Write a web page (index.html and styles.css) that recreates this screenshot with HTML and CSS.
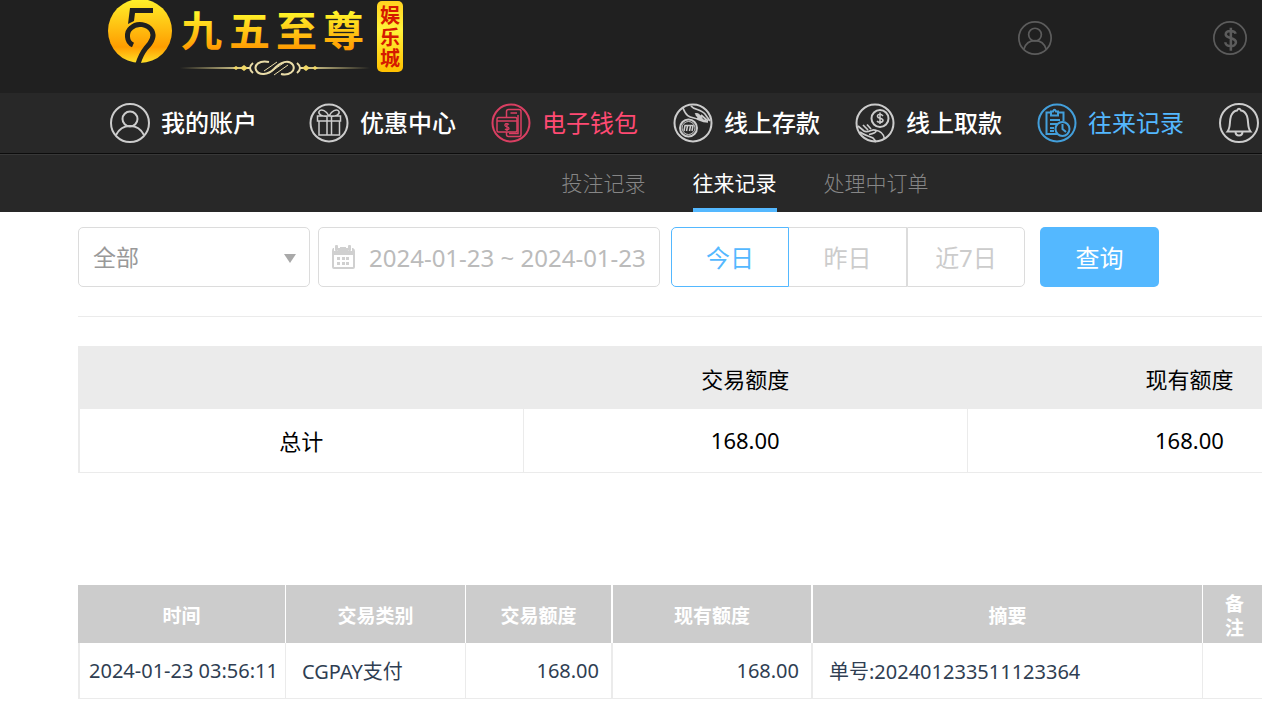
FILE: index.html
```html
<!DOCTYPE html>
<html lang="zh-CN">
<head>
    <meta charset="UTF-8">
    <meta name="viewport" content="width=device-width, initial-scale=1.0">
    <title>往来记录</title>
    <link rel="stylesheet" href="styles.css">
</head>
<body>
    <div class="page">
        <header class="header">
            <a href="#" class="logo" aria-label="九五至尊娱乐城">
                <svg width="297" height="78" viewBox="0 0 297 78">
                    <defs>
                        <linearGradient id="gold" x1="0" y1="0" x2="0" y2="1">
                            <stop offset="0" stop-color="#fff02a"/>
                            <stop offset="0.75" stop-color="#ff9d00"/>
                            <stop offset="1" stop-color="#ffe028"/>
                        </linearGradient>
                        <linearGradient id="badge" x1="0" y1="0" x2="0" y2="1">
                            <stop offset="0" stop-color="#ffd21f"/>
                            <stop offset="0.4" stop-color="#fff23a"/>
                            <stop offset="1" stop-color="#ffc000"/>
                        </linearGradient>
                        <linearGradient id="goldText" gradientUnits="userSpaceOnUse" x1="0" y1="12" x2="0" y2="50">
                            <stop offset="0" stop-color="#fff62a"/>
                            <stop offset="1" stop-color="#ff9800"/>
                        </linearGradient>
                        <linearGradient id="lineLeft">
                            <stop offset="0" stop-color="#e9d98c" stop-opacity="0"/>
                            <stop offset="1" stop-color="#f3e6a4"/>
                        </linearGradient>
                        <linearGradient id="lineRight">
                            <stop offset="0" stop-color="#f3e6a4"/>
                            <stop offset="1" stop-color="#e9d98c" stop-opacity="0"/>
                        </linearGradient>
                    </defs>
                    <!-- emblem -->
                    <circle cx="32" cy="31" r="32" fill="url(#gold)"/>
                    <path d="M22 8H45V13H27L26 21L20 24Z" fill="#202020"/>
                    <path d="M25 45C18 42 18 32 23 28C29 22 40 24 44 31C47 37 43 43 38 48C34 53 32 57 30 64" fill="none" stroke="#202020" stroke-width="5"/>
                    <!-- name -->
                    <text class="logo-name" x="73 121 168 215" y="46" fill="url(#goldText)">九五至尊</text>
                    <!-- ornament -->
                    <rect x="72" y="67" width="70" height="2" fill="url(#lineLeft)"/>
                    <rect x="192" y="67" width="70" height="2" fill="url(#lineRight)"/>
                    <g fill="none" stroke="#e9dca8" stroke-width="2">
                        <path d="M161 62C151 60 146 65 148 70C151 76 160 75 166 69C172 62 181 59 185 65C188 71 181 76 173 74"/>
                        <path d="M156 71L169 62M161 73L177 62M166 75L180 65" stroke-width="1"/>
                        <path d="M145 63Q139 68 145 73M189 63Q195 68 189 73"/>
                    </g>
                    <path d="M125 68l3-2 3 2-3 2zM132 68l4-3 4 3-4 3zM194 68l4-3 4 3-4 3zM204 68l3-2 3 2-3 2z" fill="#f0d766"/>
                    <!-- badge -->
                    <rect x="269" y="1" width="26" height="71" rx="5" fill="url(#badge)"/>
                    <text class="logo-badge" x="272 272 272" y="23 45 66">娱乐城</text>
                </svg>
            </a>
            <div class="header-tools">
                <a href="#" aria-label="账户">
                    <svg class="tool-icon" viewBox="0 0 40 40">
                        <circle cx="20" cy="20" r="19"/>
                        <circle cx="20" cy="16" r="7.5"/>
                        <path d="M7 33C9 26 14 23 20 23s11 3 13 10"/>
                    </svg>
                </a>
                <a href="#" aria-label="余额">
                    <svg class="tool-icon" viewBox="0 0 40 40">
                        <circle cx="20" cy="20" r="19"/>
                        <path d="M26.500 15C26 11 15 10 15 16C15 21 27 19 27 25C27 31 15 31 14.500 25M21 8V35" stroke-width="3"/>
                    </svg>
                </a>
            </div>
        </header>

        <nav class="main-nav">
            <a href="#" class="nav-item nav-account">
                <svg class="nav-icon" viewBox="0 0 40 40">
                    <circle cx="20" cy="20" r="19"/>
                    <circle cx="20" cy="16" r="7.5"/>
                    <path d="M6 32C9 26 14 23 20 23s11 3 14 9"/>
                </svg>
                我的账户
            </a>
            <a href="#" class="nav-item">
                <svg class="nav-icon" viewBox="0 0 40 40">
                    <circle cx="20" cy="20" r="18.500"/>
                    <path d="M8.500 13h23v5h-23zM10 18h20.500v14H10zM18 13v19M22.500 13v19M19 13C13 14 9 11 10 8.500C12 5 18 8 20 13M21 13C27 14 31 11 30 8.500C28 5 22 8 20 13" stroke-width="1.500"/>
                </svg>
                优惠中心
            </a>
            <a href="#" class="nav-item nav-wallet">
                <svg class="nav-icon" viewBox="0 0 40 40">
                    <circle cx="20" cy="20" r="18.500"/>
                    <path d="M15.500 14V8.500Q15.500 6.500 17.500 6.500H28Q30 6.500 30 8.500V31.500Q30 33.500 28 33.500H17.500Q15.500 33.500 15.500 31.500V29M19.500 10H26M27 12V30.500H18" stroke-width="1.500"/>
                    <rect x="6" y="14.500" width="20" height="14.500" rx="1.500" stroke-width="1.500"/>
                    <path d="M6 18H26M18 21.500C16 20 13.500 20.500 14 22.500C14.500 24 18 23.500 18 25.500C18 27 15 27 14 26M16 20V28" stroke-width="1.300"/>
                </svg>
                电子钱包
            </a>
            <a href="#" class="nav-item">
                <svg class="nav-icon" viewBox="0 0 40 40">
                    <circle cx="20" cy="20" r="18.500"/>
                    <circle cx="15.500" cy="25" r="8.500"/>
                    <circle cx="15.500" cy="25" r="6.500" stroke-width="1"/>
                    <path d="M11 28L12 22.500H20L19 28M13.500 28L14.500 23M16.500 28L17.500 23" stroke-width="1.500"/>
                    <path d="M10 5C13 13 16 14 21 15C26 16 28 19 35 19M18 3C21 7 28 6 32 11L37 18M22 11C25 10 27 12 29 16M24 15L33 18M28 12L35 18M23 12L30 17" stroke-width="1.700"/>
                </svg>
                线上存款
            </a>
            <a href="#" class="nav-item">
                <svg class="nav-icon" viewBox="0 0 40 40">
                    <circle cx="20" cy="20" r="18.500"/>
                    <circle cx="25" cy="15.500" r="8.500"/>
                    <path d="M28 13C26 10.500 22 11 22.500 13.500C23 16 28 14.500 28 17.500C27.500 20 23 19.500 22 18M25 9.500V21" stroke-width="1.500"/>
                    <path d="M3 23L9 28Q11 29.500 16 27.500Q20 26 21 28Q21 30 14 31.500M8 22L13 27M12 21.500L16 26M5 29C10 33 15 33 18 35Q20 37 21 39M20 27C26 28 29 31 29.500 36" stroke-width="1.700"/>
                </svg>
                线上取款
            </a>
            <a href="#" class="nav-item nav-record">
                <svg class="nav-icon" viewBox="0 0 40 40">
                    <circle cx="20" cy="20" r="18.500"/>
                    <path d="M14 9.500H9.500V31H20M21 9.500H26.500V18M14 8.500H16Q17.500 5 19 8.500H21V12.500H14zM13 17H23M13 21H20M13 25H17M13 28H17" stroke-width="2"/>
                    <circle cx="25.500" cy="26" r="7"/>
                    <path d="M25.500 21V26L29 29" stroke-width="2"/>
                </svg>
                往来记录
            </a>
            <a href="#" class="nav-item" aria-label="公告">
                <svg class="nav-icon" viewBox="0 0 40 40">
                    <circle cx="20" cy="20" r="19"/>
                    <path d="M8.500 28.500C12 24 10 19 12 13Q14 8 18 7.500Q20 4 22 7.500Q26 8 28 13C30 19 28 24 31.500 28.500zM16.500 28.500Q16.500 32.500 20 32.500T23.500 28.500"/>
                </svg>
            </a>
        </nav>

        <nav class="sub-nav">
            <a href="#">投注记录</a>
            <a href="#" class="active">往来记录</a>
            <a href="#">处理中订单</a>
        </nav>

        <main class="content">
            <form class="filters">
                <div class="select-box">
                    <select aria-label="交易类别">
                        <option>全部</option>
                    </select>
                    <span class="select-arrow"></span>
                </div>
                <label class="date-box">
                    <svg class="date-icon" width="25" height="26" viewBox="0 0 25 26" aria-hidden="true">
                        <path d="M2 4H3V7H7V4H9V3H15V4H17V7H21V4H22Q24 5 24 7V23Q24 25 22 25H3Q1 25 1 23V7Q1 5 2 4z" fill="#d0d0d0"/>
                        <rect x="4" y="1" width="3" height="6" rx="1" fill="#d0d0d0"/>
                        <rect x="17" y="1" width="3" height="6" rx="1" fill="#d0d0d0"/>
                        <rect x="3" y="11" width="19" height="12" fill="#fff"/>
                        <path d="M6 13h3v3H6zM11 13h3v3h-3zM15 13h3v3h-3zM6 18h3v3H6zM11 18h3v3h-3zM15 18h3v3h-3z" fill="#d0d0d0"/>
                    </svg>
                    <input type="text" value="2024-01-23 ~ 2024-01-23" aria-label="日期范围">
                </label>
                <div class="range-group">
                    <button type="button" class="active">今日</button>
                    <button type="button">昨日</button>
                    <button type="button">近7日</button>
                </div>
                <button type="button" class="search-button">查询</button>
            </form>

            <table class="summary-table">
                <thead>
                    <tr><td></td><th>交易额度</th><th>现有额度</th></tr>
                </thead>
                <tbody>
                    <tr><td>总计</td><td>168.00</td><td>168.00</td></tr>
                </tbody>
            </table>

            <table class="record-table">
                <colgroup>
                    <col class="col-time">
                    <col class="col-type">
                    <col class="col-amount">
                    <col class="col-balance">
                    <col class="col-summary">
                    <col class="col-remark">
                </colgroup>
                <thead>
                    <tr>
                        <th>时间</th>
                        <th>交易类别</th>
                        <th class="wide-line">交易额度</th>
                        <th class="wide-line">现有额度</th>
                        <th>摘要</th>
                        <th>备注</th>
                    </tr>
                </thead>
                <tbody>
                    <tr>
                        <td class="time">2024-01-23 03:56:11</td>
                        <td>CGPAY支付</td>
                        <td class="number wide-line">168.00</td>
                        <td class="number wide-line">168.00</td>
                        <td>单号:202401233511123364</td>
                        <td></td>
                    </tr>
                </tbody>
            </table>
        </main>
    </div>
</body>
</html>
```
FILE: styles.css
```css
/* Reset and Base Styles */
* {
    box-sizing: border-box;
}

body {
    margin: 0;
    font-family: "Noto Sans", "Noto Sans CJK SC", sans-serif;
    background-color: #fff;
    color: #000;
    overflow-x: hidden;
}

a {
    color: inherit;
    text-decoration: none;
}

button,
input,
select {
    font-family: inherit;
}

.page {
    min-width: 1490px;
}

/* Header */
.header {
    display: flex;
    align-items: flex-start;
    height: 93px;
    padding-left: 108px;
    background: #202020;
}

.logo svg {
    display: block;
}

.logo-name {
    font-family: "Noto Sans CJK SC", sans-serif;
    font-size: 41px;
    font-weight: 700;
}

.logo-badge {
    font-family: "Noto Sans CJK SC", sans-serif;
    font-size: 20px;
    font-weight: 700;
    fill: #d51900;
}

.header-tools {
    display: flex;
    gap: 161px;
    margin-left: 613px;
    padding-top: 21px;
}

.tool-icon {
    display: block;
    width: 34px;
    height: 34px;
    fill: none;
    stroke: #5c5c5c;
    stroke-width: 2;
}

/* Main navigation */
.main-nav {
    display: flex;
    align-items: center;
    gap: 35px;
    height: 61px;
    padding-left: 110px;
    background: #282828;
    border-bottom: 1px solid #0c0c0c;
    color: #fff;
}

.nav-item {
    display: flex;
    align-items: center;
    flex-shrink: 0;
    gap: 11px;
    font-size: 24px;
    font-weight: 500;
    line-height: 36px;
}

.nav-account {
    margin-right: 17px;
}

.nav-icon {
    width: 40px;
    height: 40px;
    fill: none;
    stroke: #ccc;
    stroke-width: 2;
}

.nav-wallet {
    color: #ff4a73;
    font-weight: 400;
}

.nav-wallet .nav-icon {
    stroke: #d93f62;
}

.nav-record {
    color: #54b8ff;
    font-weight: 400;
}

.nav-record .nav-icon {
    stroke: #439fdb;
}

/* Sub navigation */
.sub-nav {
    display: flex;
    justify-content: center;
    gap: 47px;
    height: 58px;
    background: #282828;
    border-top: 1px solid #383838;
    color: #868686;
    font-size: 21px;
    font-weight: 300;
    line-height: 57px;
}

.sub-nav .active {
    color: #fff;
    font-weight: 400;
    border-bottom: 4px solid #54b8ff;
}

/* Filters */
.content {
    padding: 15px 78px;
}

.filters {
    display: flex;
    padding-bottom: 29px;
    border-bottom: 1px solid #ebebeb;
}

.select-box {
    position: relative;
    width: 232px;
    height: 60px;
    margin-right: 8px;
}

.select-box select {
    width: 100%;
    height: 100%;
    padding: 0 14px;
    appearance: none;
    background: #fff;
    border: 1px solid #dcdcdc;
    border-radius: 5px;
    color: #999;
    font-size: 23px;
}

.select-arrow {
    position: absolute;
    top: 27px;
    right: 14px;
    border: 6px solid transparent;
    border-top: 9px solid #a9a9a9;
    border-bottom: 0;
    pointer-events: none;
}

.date-box {
    display: flex;
    align-items: center;
    gap: 13px;
    width: 342px;
    height: 60px;
    margin-right: 11px;
    padding-left: 12px;
    border: 1px solid #dcdcdc;
    border-radius: 5px;
}

.date-icon {
    flex-shrink: 0;
}

.date-box input {
    flex: 1;
    min-width: 0;
    padding: 0;
    border: 0;
    outline: none;
    background: none;
    color: #bbb;
    font-size: 24px;
}

.range-group {
    display: flex;
    margin-right: 15px;
}

.range-group button {
    width: 118px;
    height: 60px;
    padding: 0 0 2px;
    background: #fff;
    border: 1px solid #dcdcdc;
    border-left-width: 0;
    color: #ccc;
    font-size: 24px;
}

.range-group button:first-child {
    border-radius: 5px 0 0 5px;
}

.range-group button:last-child {
    border-left-width: 1px;
    border-radius: 0 5px 5px 0;
}

.range-group .active {
    border: 1px solid #54b8ff;
    color: #54b8ff;
}

.search-button {
    width: 119px;
    height: 60px;
    padding: 0 0 2px;
    background: #54b8ff;
    border: 0;
    border-radius: 5px;
    color: #fff;
    font-size: 24px;
}

/* Summary table */
.summary-table {
    width: 100%;
    margin-top: 29px;
    table-layout: fixed;
    border-collapse: collapse;
    border-left: 2px solid #ebebeb;
    font-size: 22px;
    text-align: center;
}

.summary-table th {
    font-weight: 400;
}

.summary-table thead {
    background: #ebebeb;
}

.summary-table th,
.summary-table td {
    height: 63px;
    padding: 0;
}

.summary-table tbody td {
    border-right: 1px solid #ebebeb;
    border-bottom: 1px solid #ebebeb;
}

/* Record table */
.record-table {
    width: 1189px;
    margin-top: 112px;
    table-layout: fixed;
    border-collapse: separate;
    border-spacing: 0;
    color: #2f3e52;
    font-size: 20px;
}

.col-time { width: 208px; }
.col-type { width: 180px; }
.col-amount { width: 147px; }
.col-balance { width: 200px; }
.col-summary { width: 390px; }
.col-remark { width: 64px; }

.record-table th {
    height: 58px;
    padding: 4px 20px 0;
    background: #ccc;
    border-right: 1px solid #fff;
    color: #fff;
    font-size: 19px;
    line-height: 24px;
}

.record-table td {
    height: 56px;
    padding: 0 16px;
    border-right: 1px solid #ebebeb;
    border-bottom: 1px solid #ebebeb;
    white-space: nowrap;
}

.record-table .wide-line {
    border-right-width: 2px;
}

.record-table .time {
    padding: 0 0 0 9px;
    border-left: 2px solid #ebebeb;
}

.record-table .number {
    padding-right: 12px;
    text-align: right;
}
```
